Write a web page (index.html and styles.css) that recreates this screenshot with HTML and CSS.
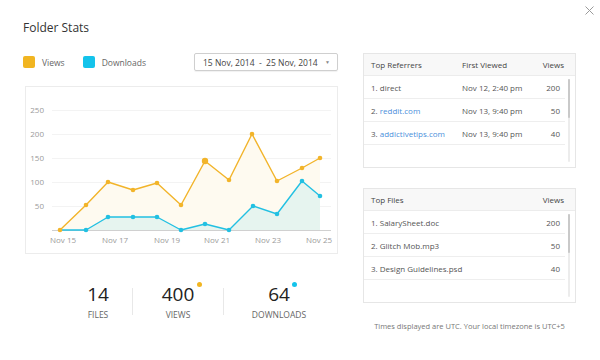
FILE: index.html
```html
<!DOCTYPE html>
<html>
<head>
<meta charset="utf-8">
<link rel="stylesheet" href="styles.css">
</head>
<body>
<div class="modal">
  <h1 class="title">Folder Stats</h1>
  <button class="close" aria-label="Close">
    <svg width="9" height="9" viewBox="0 0 9 9"><path d="M0.5 0.5L8.5 8.5M8.5 0.5L0.5 8.5" stroke="#9a9a9a" stroke-width="1" fill="none"/></svg>
  </button>
  <div class="content">
    <div class="left">
      <div class="legend-row">
        <div class="legend">
          <span class="legend-item"><span class="swatch swatch-views"></span>Views</span>
          <span class="legend-item"><span class="swatch swatch-downloads"></span>Downloads</span>
        </div>
        <div class="dropdown">
          <span class="dropdown-text">15 Nov, 2014&nbsp; - &nbsp;25 Nov, 2014</span>
          <span class="caret">▼</span>
        </div>
      </div>
      <div class="chart-card">
        <svg class="chart" width="311" height="166" viewBox="26 87 311 166">
          <g stroke="#f3f3f3" stroke-width="1">
            <line x1="52" y1="110.5" x2="331" y2="110.5"/>
            <line x1="52" y1="134.5" x2="331" y2="134.5"/>
            <line x1="52" y1="158.5" x2="331" y2="158.5"/>
            <line x1="52" y1="182.5" x2="331" y2="182.5"/>
            <line x1="52" y1="206.5" x2="331" y2="206.5"/>
          </g>
          <g class="axis-text" text-anchor="end">
            <text x="44" y="113">250</text>
            <text x="44" y="137">200</text>
            <text x="44" y="161">150</text>
            <text x="44" y="185">100</text>
            <text x="44" y="209">50</text>
          </g>
          <polygon fill="#fefaf0" points="60,230 86,205 108,182 133,190 157,183 181,205 205,161 229,180 252,134 277,181 302,168 320,158 320,230"/>
          <polygon fill="#e6f4ef" points="60,230 86,230 108,217 133,217 157,217 181,230 205,224 229,230 253,206 277,214 302,181 320,196 320,230"/>
          <line x1="52" y1="230.5" x2="331" y2="230.5" stroke="#d0d0d0" stroke-width="1"/>
          <polyline fill="none" stroke="#f2b42a" stroke-width="1.4" stroke-linejoin="round" points="60,230 86,205 108,182 133,190 157,183 181,205 205,161 229,180 252,134 277,181 302,168 320,158"/>
          <polyline fill="none" stroke="#22c0e2" stroke-width="1.4" stroke-linejoin="round" points="60,230 86,230 108,217 133,217 157,217 181,230 205,224 229,230 253,206 277,214 302,181 320,196"/>
          <g fill="#f2b42a">
            <circle cx="60" cy="230" r="2.3"/><circle cx="86" cy="205" r="2.3"/><circle cx="108" cy="182" r="2.3"/><circle cx="133" cy="190" r="2.3"/><circle cx="157" cy="183" r="2.3"/><circle cx="181" cy="205" r="2.3"/><circle cx="205" cy="161" r="3.2"/><circle cx="229" cy="180" r="2.3"/><circle cx="252" cy="134" r="2.3"/><circle cx="277" cy="181" r="2.3"/><circle cx="302" cy="168" r="2.3"/><circle cx="320" cy="158" r="2.3"/>
          </g>
          <g fill="#22c0e2">
            <circle cx="86" cy="230" r="2.3"/><circle cx="108" cy="217" r="2.3"/><circle cx="133" cy="217" r="2.3"/><circle cx="157" cy="217" r="2.3"/><circle cx="181" cy="230" r="2.3"/><circle cx="205" cy="224" r="2.3"/><circle cx="229" cy="230" r="2.3"/><circle cx="253" cy="206" r="2.3"/><circle cx="277" cy="214" r="2.3"/><circle cx="302" cy="181" r="2.3"/><circle cx="320" cy="196" r="2.3"/>
          </g>
          <g class="axis-text" text-anchor="middle">
            <text x="63" y="243">Nov 15</text>
            <text x="115" y="243">Nov 17</text>
            <text x="167" y="243">Nov 19</text>
            <text x="217" y="243">Nov 21</text>
            <text x="268" y="243">Nov 23</text>
            <text x="319" y="243">Nov 25</text>
          </g>
        </svg>
      </div>
      <div class="stats">
        <div class="stat stat-files">
          <span class="stat-num">14</span>
          <span class="stat-label">FILES</span>
        </div>
        <div class="divider"></div>
        <div class="stat stat-views">
          <span class="stat-num">400<span class="dot dot-views"></span></span>
          <span class="stat-label">VIEWS</span>
        </div>
        <div class="divider"></div>
        <div class="stat stat-downloads">
          <span class="stat-num">64<span class="dot dot-downloads"></span></span>
          <span class="stat-label">DOWNLOADS</span>
        </div>
      </div>
    </div>
    <div class="right">
      <div class="card">
        <div class="card-head grid-ref">
          <span>Top Referrers</span><span>First Viewed</span><span class="num">Views</span>
        </div>
        <div class="card-body">
          <div class="rows">
            <div class="row grid-ref"><span>1. direct</span><span>Nov 12, 2:40 pm</span><span class="num">200</span></div>
            <div class="row grid-ref"><span>2. <a class="link">reddit.com</a></span><span>Nov 13, 9:40 pm</span><span class="num">50</span></div>
            <div class="row grid-ref"><span>3. <a class="link">addictivetips.com</a></span><span>Nov 13, 9:40 pm</span><span class="num">40</span></div>
          </div>
          <div class="scroll"><div class="thumb"></div></div>
        </div>
      </div>
      <div class="card card-files">
        <div class="card-head grid-files">
          <span>Top Files</span><span class="num">Views</span>
        </div>
        <div class="card-body">
          <div class="rows">
            <div class="row grid-files"><span>1. SalarySheet.doc</span><span class="num">200</span></div>
            <div class="row grid-files"><span>2. Glitch Mob.mp3</span><span class="num">50</span></div>
            <div class="row grid-files"><span>3. Design Guidelines.psd</span><span class="num">40</span></div>
          </div>
          <div class="scroll"><div class="thumb"></div></div>
        </div>
      </div>
      <p class="footnote">Times displayed are UTC. Your local timezone is UTC+5</p>
    </div>
  </div>
</div>
</body>
</html>
```
FILE: styles.css
```css
html, body {
  margin: 0;
  padding: 0;
  background: #ffffff;
}
body {
  font-family: "Open Sans", "Liberation Sans", sans-serif;
  color: #555;
}
.modal {
  position: relative;
  width: 600px;
  height: 360px;
  box-sizing: border-box;
  padding: 19px 0 0 23px;
}
.title {
  margin: 0;
  font-size: 12px;
  line-height: 18px;
  font-weight: 400;
  color: #333;
}
.close {
  position: absolute;
  top: 6px;
  right: 6px;
  width: 9px;
  height: 9px;
  padding: 0;
  border: 0;
  background: none;
  display: block;
}
.close svg { display: block; }
.content {
  display: flex;
  margin-top: 16px;
}
.left {
  width: 315px;
}
.right {
  width: 213px;
  margin-left: 25px;
}
.legend-row {
  display: flex;
  align-items: center;
  justify-content: space-between;
  height: 18px;
}
.legend {
  display: flex;
  align-items: center;
  gap: 18px;
}
.legend-item {
  display: flex;
  align-items: center;
  gap: 7px;
  font-size: 8.5px;
  color: #666;
}
.swatch {
  width: 12px;
  height: 12px;
  border-radius: 2px;
}
.swatch-views { background: #f1b521; }
.swatch-downloads { background: #14c3eb; }
.dropdown {
  width: 144px;
  height: 18px;
  box-sizing: border-box;
  border: 1px solid #cfcfcf;
  border-radius: 2px;
  box-shadow: 0 1px 1px rgba(0,0,0,0.06);
  display: flex;
  align-items: center;
  justify-content: space-between;
  padding: 0 7px 0 8px;
  font-size: 8.5px;
  color: #444;
}
.caret {
  font-size: 5px;
  color: #888;
}
.chart-card {
  margin-top: 15px;
  margin-left: 2px;
  width: 313px;
  height: 168px;
  box-sizing: border-box;
  border: 1px solid #ececec;
}
.chart { display: block; }
.axis-text {
  font-family: "Open Sans", "Liberation Sans", sans-serif;
  font-size: 8px;
  fill: #9a9a9a;
}
.stats {
  display: flex;
  margin-top: 29px;
  margin-left: 41px;
}
.stat {
  display: flex;
  flex-direction: column;
  align-items: center;
}
.stat-files { width: 68px; }
.stat-views { width: 90px; }
.stat-downloads { width: 110px; }
.stat-num {
  position: relative;
  font-size: 19px;
  line-height: 22px;
  color: #222;
}
.stat-label {
  margin-top: 4px;
  font-size: 8.5px;
  line-height: 11px;
  color: #666;
}
.divider {
  width: 1px;
  height: 27px;
  margin-top: 5px;
  background: #e8e8e8;
}
.dot {
  position: absolute;
  left: calc(100% + 2.5px);
  top: -1.5px;
  width: 5px;
  height: 5px;
  border-radius: 50%;
}
.dot-views { background: #f1b521; }
.dot-downloads { background: #14c3eb; }
.card {
  height: 115px;
  box-sizing: border-box;
  border: 1px solid #e6e6e6;
  display: flex;
  flex-direction: column;
  font-size: 8px;
}
.card-files { margin-top: 20px; }
.card-head {
  height: 21px;
  background: #f8f8f8;
  border-bottom: 1px solid #ececec;
  padding: 0 11px 0 7px;
  align-items: center;
  color: #444;
}
.grid-ref {
  display: grid;
  grid-template-columns: 91px 1fr auto;
}
.grid-files {
  display: grid;
  grid-template-columns: 1fr auto;
}
.num { text-align: right; }
.card-body {
  flex: 1;
  display: flex;
}
.rows {
  flex: 1;
}
.row {
  height: 22px;
  border-bottom: 1px solid #eeeeee;
  padding: 0 5px 0 7px;
  align-items: center;
  color: #555;
}
.link { color: #4a8fdb; text-decoration: none; }
.scroll {
  width: 2px;
  margin: 3px 5px 5px 3px;
  background: #ececec;
  border-radius: 1px;
}
.thumb {
  height: 39px;
  background: #c9c9c9;
  border-radius: 1px;
}
.footnote {
  margin: 18px 0 0;
  text-align: center;
  font-size: 7.5px;
  color: #777;
}
```
